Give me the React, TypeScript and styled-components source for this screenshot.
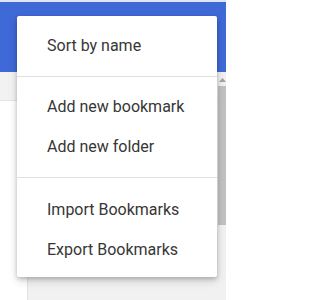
import React, { FC } from 'react';
import styled, { createGlobalStyle } from 'styled-components';

const GlobalStyle = createGlobalStyle`
  html, body {
    margin: 0;
    padding: 0;
    width: 226px;
    height: 300px;
    overflow: hidden;
  }
  body {
    font-family: Roboto, "Liberation Sans", sans-serif;
  }
`;

const Page = styled.div`
  position: relative;
  width: 226px;
  height: 300px;
  display: flex;
  flex-direction: column;
  background-color: #fff;
`;

const Header = styled.div`
  height: 70px;
  border-top: 2px solid #dfe5f4;
  background-color: #3f69d6;
  flex-shrink: 0;
`;

const Body = styled.div`
  flex: 1;
  display: flex;
`;

const Main = styled.div`
  flex: 1;
  display: flex;
  flex-direction: column;
`;

const Toolbar = styled.div`
  height: 28px;
  background-color: #f2f2f2;
  border-bottom: 1px solid #e4e4e4;
`;

const Columns = styled.div`
  flex: 1;
  display: flex;
`;

const Sidebar = styled.div`
  width: 27px;
  background-color: #fff;
`;

const Panel = styled.div`
  flex: 1;
  background-color: #f1f1f1;
  border-left: 1px solid #e2e2e2;
`;

const Scrollbar = styled.div`
  width: 8px;
  display: flex;
  flex-direction: column;
  background-color: #f1f1f1;
`;

const ScrollArrow = styled.div`
  height: 14px;
  display: flex;
  align-items: center;
  justify-content: center;
  color: #a3a3a3;
`;

const ScrollThumb = styled.div`
  height: 139px;
  background-color: #c1c1c1;
`;

const Menu = styled.div`
  position: absolute;
  left: 17px;
  top: 16px;
  width: 200px;
  background-color: #fff;
  border-radius: 2px;
  box-shadow: 0 2px 4px rgba(0, 0, 0, 0.2), 0 4px 10px rgba(0, 0, 0, 0.14);
`;

const Section = styled.div<{ $top: number; $bottom: number }>`
  padding: ${(p) => p.$top}px 0 ${(p) => p.$bottom}px;
  & + & {
    border-top: 1px solid #e0e0e0;
  }
`;

const Item = styled.div`
  height: 40px;
  display: flex;
  align-items: center;
  padding-left: 30px;
  font-size: 16px;
  color: #363636;
  white-space: nowrap;
`;

const App: FC = () => {
  return (
    <Page>
      <GlobalStyle />
      <Header />
      <Body>
        <Main>
          <Toolbar />
          <Columns>
            <Sidebar />
            <Panel />
          </Columns>
        </Main>
        <Scrollbar>
          <ScrollArrow>
            <svg width="7" height="5" viewBox="0 0 7 5">
              <path d="M0 5 L3.5 1 L7 5 Z" fill="currentColor" />
            </svg>
          </ScrollArrow>
          <ScrollThumb />
        </Scrollbar>
      </Body>
      <Menu>
        <Section $top={9} $bottom={11}>
          <Item>Sort by name</Item>
        </Section>
        <Section $top={9} $bottom={11}>
          <Item>Add new bookmark</Item>
          <Item>Add new folder</Item>
        </Section>
        <Section $top={11} $bottom={8}>
          <Item>Import Bookmarks</Item>
          <Item>Export Bookmarks</Item>
        </Section>
      </Menu>
    </Page>
  );
};

export default App;
